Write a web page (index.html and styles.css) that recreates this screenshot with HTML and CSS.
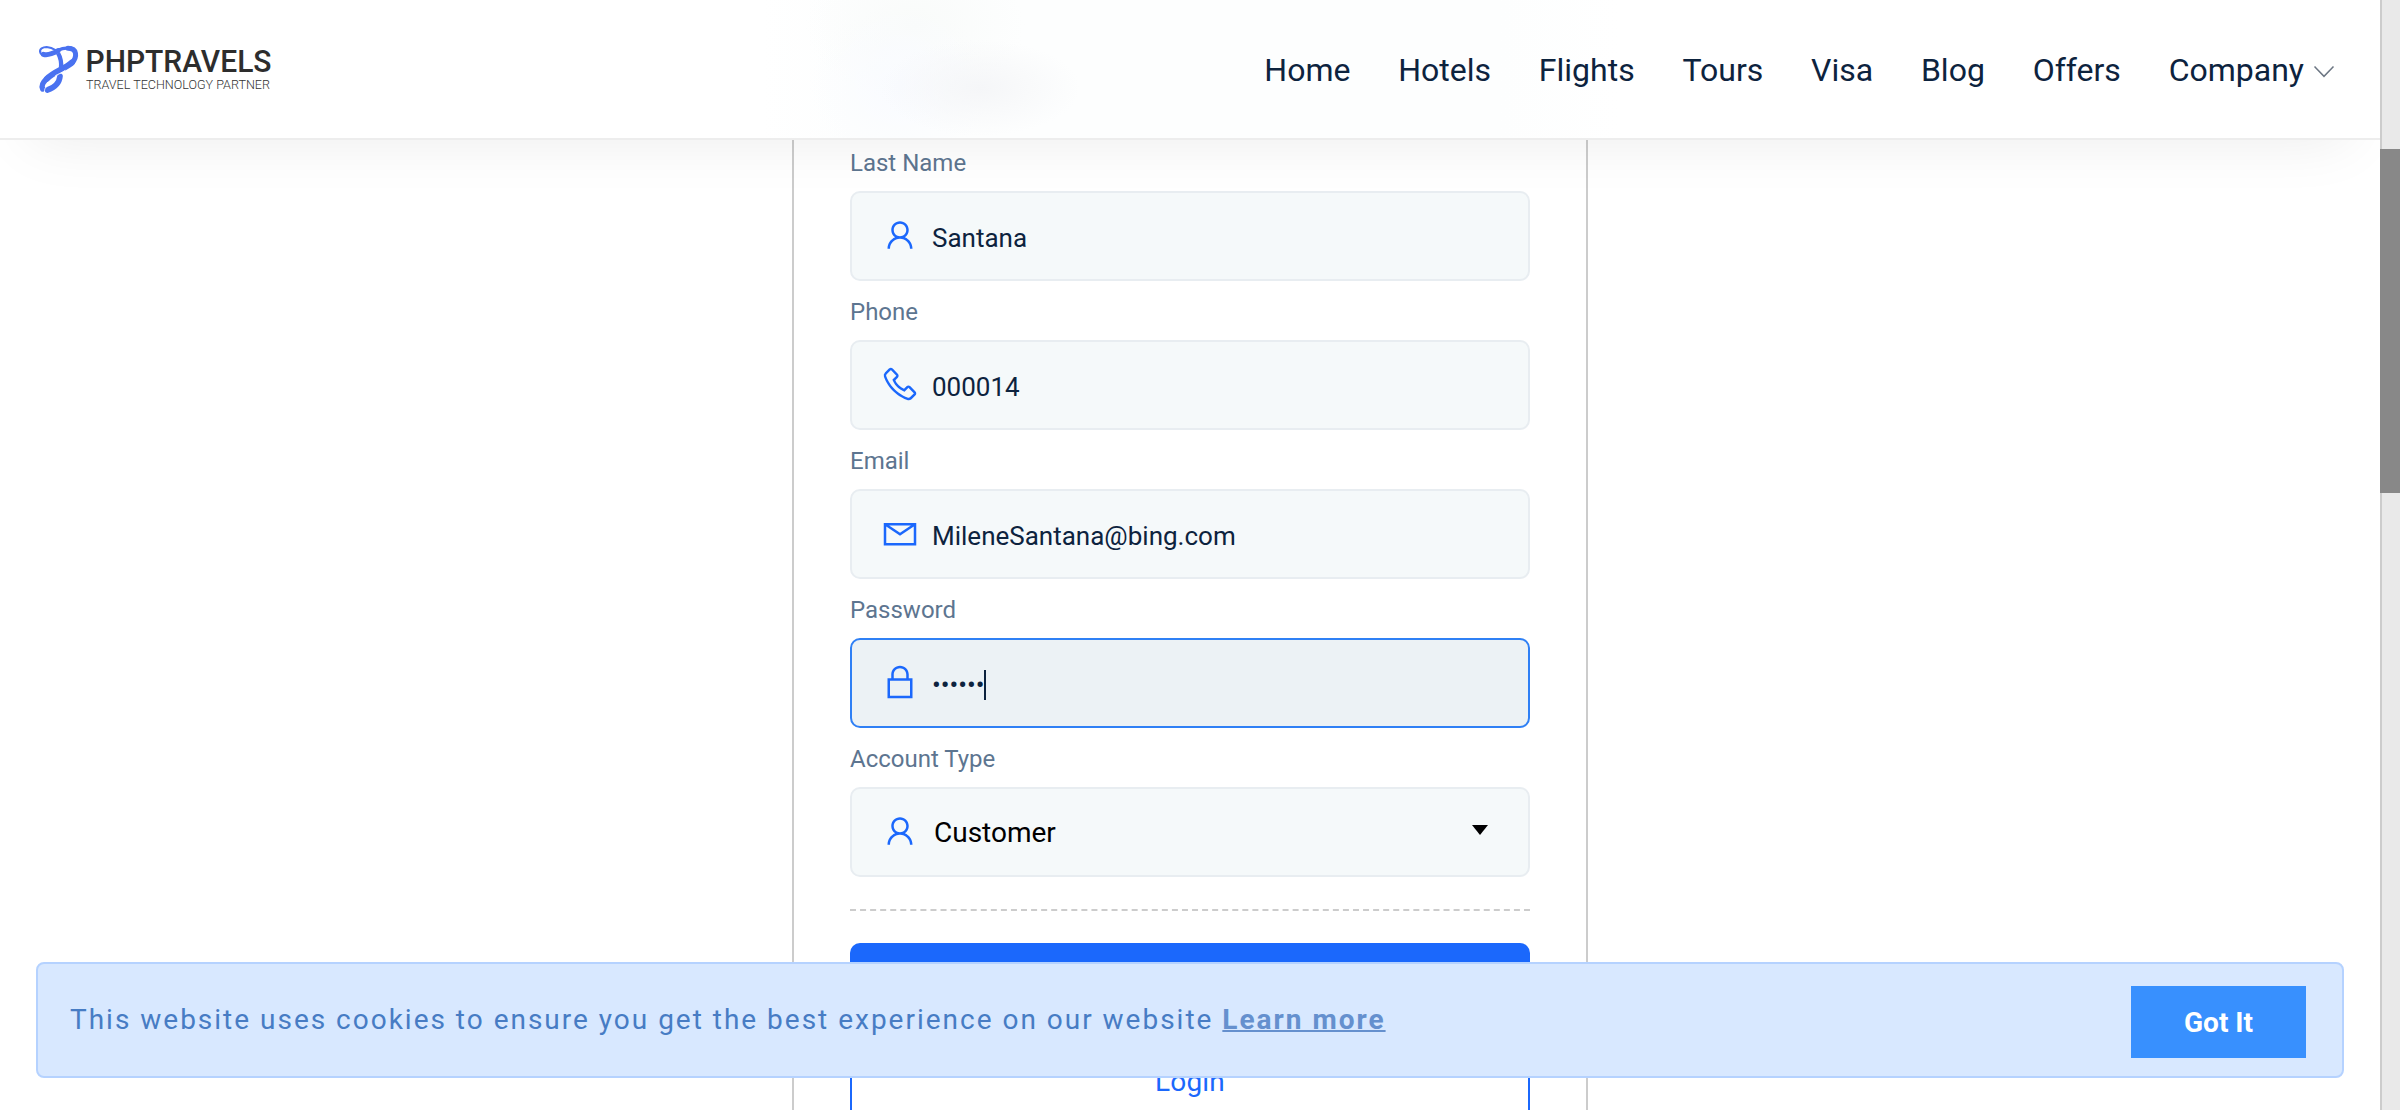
FILE: index.html
```html
<!DOCTYPE html>
<html lang="en">
<head>
<meta charset="utf-8">
<title>Signup - PHPTRAVELS</title>
<link rel="stylesheet" href="styles.css">
</head>
<body>
<svg class="sprite" aria-hidden="true">
  <symbol id="i-user" viewBox="0 0 32 32"><path d="M16 5C12.15 5 9 8.15 9 12c0 2.41 1.23 4.55 3.09 5.81C8.53 19.34 6 22.88 6 27h2c0-4.43 3.57-8 8-8s8 3.57 8 8h2c0-4.12-2.53-7.66-6.09-9.19C21.77 16.55 23 14.41 23 12c0-3.85-3.15-7-7-7zm0 2c2.77 0 5 2.23 5 5s-2.23 5-5 5-5-2.23-5-5 2.23-5 5-5z"/></symbol>
  <symbol id="i-phone" viewBox="0 0 32 32"><path d="M8.656 3c-.523 0-1.039.188-1.469.531l-.062.032-.031.03-3.125 3.22.031.03a3.19 3.19 0 0 0-.844 3.376c.004.008-.004.023 0 .031.848 2.426 3.016 7.11 7.25 11.344 4.25 4.25 8.996 6.332 11.344 7.25h.031c1.215.406 2.532.117 3.469-.688L28.406 25c.828-.828.828-2.266 0-3.094l-4.062-4.062-.031-.063c-.829-.828-2.297-.828-3.125 0l-2 2a16.176 16.176 0 0 1-4.126-2.812c-1.64-1.567-2.476-3.36-2.78-4.063l2-2c.84-.84.855-2.238-.032-3.062l.031-.031-.093-.094-4-4.094-.032-.031-.03-.032A2.356 2.356 0 0 0 8.656 3zm0 2a.35.35 0 0 1 .219.094l4 4.093.094.094c-.008-.008.058.098-.063.219l-2.5 2.5-.468.438.218.624s1.149 3.075 3.563 5.376l.218.187C16.262 20.746 19 21.906 19 21.906l.625.281 2.969-2.968c.172-.172.14-.172.312 0L27 23.313c.172.171.172.109 0 .28l-3.063 3.063c-.46.395-.949.477-1.53.282C20.14 26.047 15.671 24.078 11.719 20.125 7.734 16.14 5.645 11.59 4.938 9.563c-.141-.375-.04-.93.28-1.204l.063-.062L8.313 5.188A.503.503 0 0 1 8.656 5z"/></symbol>
  <symbol id="i-mail" viewBox="0 0 32 32"><path d="M3 8v18h26V8zm4.313 2h17.375L16 15.781zM5 10.875l10.438 6.969.562.343.563-.343L27 10.875V24H5z"/></symbol>
  <symbol id="i-lock" viewBox="0 0 32 32"><path d="M16 3c-3.85 0-7 3.15-7 7v3H6v16h20V13h-3v-3c0-3.85-3.15-7-7-7zm0 2c2.77 0 5 2.23 5 5v3H11v-3c0-2.77 2.23-5 5-5zM8 15h16v12H8z"/></symbol>
</svg>

<div class="window">
  <div class="page">
    <header class="header">
      <a class="brand" href="#">
        <svg class="brand-logo" width="240" height="56" viewBox="0 0 240 56">
          <g fill="none" stroke="#4a72f0" stroke-linecap="round" stroke-linejoin="round" transform="translate(-6 -6) scale(.33333)">
            <path stroke-width="6" d="M31 50C28 42 38 36 50 36C62 37 70 41 78 46"/>
            <path stroke-width="6" d="M30 49C31 57 36 61 44 56"/>
            <path stroke-width="15" d="M40 58C52 62 68 56 84 47"/>
            <path stroke-width="10" d="M78 48C95 40 110 38 122 39"/>
            <path stroke-width="15" d="M114 40C142 40 142 66 126 84"/>
            <path stroke-width="18" d="M126 82C108 100 70 110 50 132"/>
            <path stroke-width="16" d="M52 130C38 142 33 152 38 162"/>
            <path stroke-width="13" stroke-linecap="butt" d="M84 54C92 68 95 82 93 100"/>
            <path stroke-width="17" d="M90 124C88 144 74 158 52 165"/>
            <path stroke="#fff" stroke-width="2.500" stroke-linecap="butt" d="M44 176C42 162 46 158 50 155"/>
            <path stroke="#fff" stroke-width="3" stroke-linecap="butt" d="M76 122C84 118 92 115 106 106"/>
          </g>
          <text class="brand-name" x="49.500" y="30.700" textLength="186" lengthAdjust="spacingAndGlyphs">PHPTRAVELS</text>
          <text class="brand-tag" x="50" y="48" textLength="184" lengthAdjust="spacingAndGlyphs">TRAVEL TECHNOLOGY PARTNER</text>
        </svg>
      </a>
      <nav class="nav">
        <a href="#">Home</a>
        <a href="#">Hotels</a>
        <a href="#">Flights</a>
        <a href="#">Tours</a>
        <a href="#">Visa</a>
        <a href="#">Blog</a>
        <a href="#">Offers</a>
        <a href="#" class="has-menu">Company
          <svg class="chevron" width="22" height="14" viewBox="0 0 22 14"><path d="M1.500 1.500L11 11.300L20.500 1.500" fill="none" stroke="#6c7683" stroke-width="1.500"/></svg>
        </a>
      </nav>
    </header>

    <main class="content">
      <form class="card">
        <div class="label">Last Name</div>
        <div class="field"><svg class="icon"><use href="#i-user"/></svg><span class="value">Santana</span></div>
        <div class="label">Phone</div>
        <div class="field"><svg class="icon"><use href="#i-phone"/></svg><span class="value">000014</span></div>
        <div class="label">Email</div>
        <div class="field"><svg class="icon"><use href="#i-mail"/></svg><span class="value">MileneSantana@bing.com</span></div>
        <div class="label">Password</div>
        <div class="field focused"><svg class="icon"><use href="#i-lock"/></svg><span class="value">••••••</span><span class="caret"></span></div>
        <div class="label">Account Type</div>
        <div class="field select"><svg class="icon"><use href="#i-user"/></svg><span class="value">Customer</span><span class="arrow"></span></div>
        <svg class="divider" width="680" height="2"><path d="M0 1H680" stroke="#ccc" stroke-width="2" stroke-dasharray="6 4.0597"/></svg>
        <div class="btn primary"></div>
        <div class="btn outline">Login</div>
      </form>
    </main>
  </div>
  <div class="scrollbar"><div class="thumb"></div></div>
</div>

<aside class="cookies">
  <p class="cookies-text">This website uses cookies to ensure you get the best experience on our website <a href="#">Learn more</a></p>
  <button class="cookies-btn" type="button">Got It</button>
</aside>
</body>
</html>
```
FILE: styles.css
```css
* { box-sizing: border-box; }
html, body { margin: 0; height: 100%; overflow: hidden; }
body {
  font-family: Roboto, "Liberation Sans", sans-serif;
  color: #0d233e;
  background: #fff;
}
a { color: inherit; text-decoration: none; }
svg { display: block; flex: none; }
.sprite { position: absolute; width: 0; height: 0; }

.window { display: flex; height: 1110px; overflow: hidden; }
.page { flex: 1; min-width: 0; height: 1110px; overflow: hidden; }

.scrollbar {
  width: 20px;
  padding-top: 149px;
  background: #e9e9e9;
  box-shadow: inset 2px 0 #ccc;
}
.thumb { height: 344px; background: #888; }

/* Header */
.header {
  position: relative;
  z-index: 2;
  display: flex;
  align-items: center;
  justify-content: space-between;
  height: 140px;
  padding: 0 45px 0 36px;
  border-bottom: 2px solid #ededed;
  background:
    radial-gradient(100px 48px at 980px 88px, #f5f6f8, rgba(245, 246, 248, 0)),
    radial-gradient(90px 80px at 900px 85px, #f9fbff, rgba(249, 251, 255, 0)),
    radial-gradient(110px 75px at 915px 25px, #f9fbfa, rgba(249, 251, 250, 0)),
    linear-gradient(90deg, #fff 760px, #fdfefe 850px, #fdfefe 1500px, #fff 1620px);
  box-shadow: 0 30px 60px -30px rgba(0, 0, 0, .08);
}
.brand-logo { overflow: visible; }
.brand-name { font: 500 30.500px Roboto, sans-serif; fill: #2d2d2d; }
.brand-tag { font: 300 13px Roboto, sans-serif; fill: #333; }
.nav { display: flex; gap: 47.800px; padding-top: 2px; font-size: 32px; line-height: 40px; }
.has-menu { display: flex; align-items: center; gap: 9px; }
.chevron { margin-top: 4px; }

/* Form */
.content { display: flex; justify-content: center; }
.card {
  width: 796px;
  height: 1000px;
  margin-top: -8px;
  padding: 0 56px;
  border: 2px solid #ccc;
  border-width: 0 2px;
}
.label {
  height: 59px;
  padding-top: 3px;
  font-size: 24px;
  line-height: 56px;
  color: #5d7590;
}
.field {
  display: flex;
  align-items: center;
  height: 90px;
  padding: 0 40px 0 28px;
  border: 2px solid #e8edf1;
  border-radius: 10px;
  background: #f5f9fa;
}
.field.focused { border-color: #2f80f5; background: #ecf2f5; }
.icon { width: 40px; height: 40px; margin: 0 12px 2px 0; fill: #1b68fc; }
.value { padding-top: 4px; font-size: 26px; line-height: 36px; }
.caret { width: 2px; height: 30px; margin: 4px 0 0 -1px; background: #0d233e; }
.select .value { flex: 1; padding: 2px 0 0 2px; font-size: 28px; color: #000; }
.arrow {
  width: 16px;
  height: 10px;
  margin-bottom: 4px;
  background: #000;
  clip-path: polygon(0 0, 100% 0, 50% 100%);
}
.divider { margin: 32px 0; }
.btn { border-radius: 10px; }
.primary { height: 83px; background: #1b68fc; }
.outline {
  height: 90px;
  margin-top: 10px;
  border: 2px solid #1b68fc;
  font-size: 28px;
  line-height: 87px;
  letter-spacing: .2px;
  text-align: center;
  color: #1b68fc;
}

/* Cookie notice */
.cookies {
  position: fixed;
  z-index: 3;
  left: 36px;
  right: 56px;
  bottom: 32px;
  display: flex;
  align-items: center;
  justify-content: space-between;
  height: 116px;
  padding: 0 36px 0 32px;
  border: 2px solid #b5d2ff;
  border-radius: 8px;
  background: #d8e8ff;
}
.cookies-text {
  margin: 0;
  font-size: 28px;
  line-height: 40px;
  letter-spacing: 1.990px;
  color: #477cc4;
}
.cookies-text a {
  font-weight: 700;
  color: #6590ce;
  text-decoration: underline;
  text-decoration-thickness: 2px;
}
.cookies-btn {
  width: 175px;
  height: 72px;
  margin-top: 4px;
  padding: 0;
  border: 0;
  background: #3890fe;
  font: 700 28px Roboto, sans-serif;
  color: #fff;
}
```
